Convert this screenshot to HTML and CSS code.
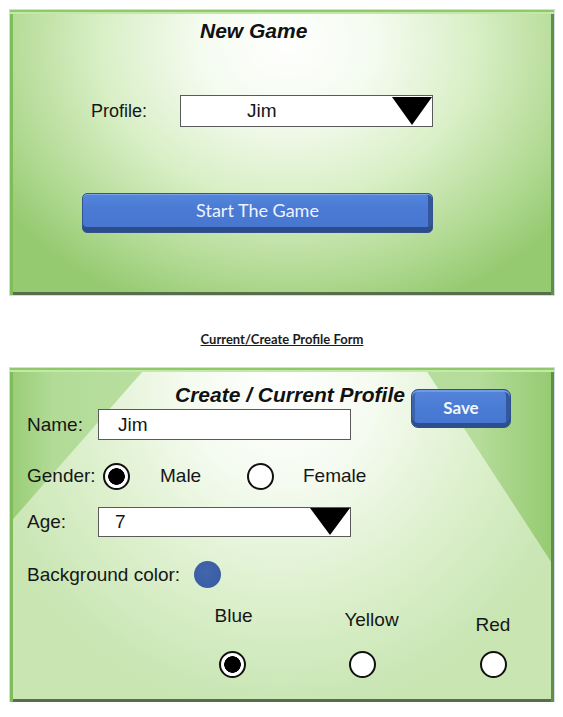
FILE: index.html
```html
<!DOCTYPE html>
<html>
<head>
<meta charset="utf-8">
<title>Game mockups</title>
<link rel="stylesheet" href="styles.css">
</head>
<body>
<div class="page">
  <section class="panel panel-game">
    <h1 class="title title-game">New Game</h1>
    <div class="profile-row">
      <span class="profile-label">Profile:</span>
      <div class="select select-profile"><span class="select-value">Jim</span><span class="caret"></span></div>
    </div>
    <div class="start-btn">Start The Game</div>
  </section>

  <p class="caption">Current/Create Profile Form</p>

  <section class="panel panel-profile">
    <div class="header-row">
      <h2 class="title title-profile">Create / Current Profile</h2>
      <div class="save-btn">Save</div>
    </div>
    <div class="form-row name-row">
      <span class="field-label">Name:</span>
      <div class="text-field name-field">Jim</div>
    </div>
    <div class="form-row gender-row">
      <span class="gender-label">Gender:</span>
      <span class="radio radio-on"></span>
      <span class="gender-opt gender-male">Male</span>
      <span class="radio"></span>
      <span class="gender-opt gender-female">Female</span>
    </div>
    <div class="form-row age-row">
      <span class="field-label">Age:</span>
      <div class="select select-age"><span class="select-value age-value">7</span><span class="caret"></span></div>
    </div>
    <div class="form-row bg-row">
      <span class="bg-label">Background color:</span>
      <span class="color-dot"></span>
    </div>
    <div class="color-grid">
      <div class="color-opt">
        <span class="color-label label-blue">Blue</span>
        <span class="radio radio-on"></span>
      </div>
      <div class="color-opt">
        <span class="color-label label-yellow">Yellow</span>
        <span class="radio"></span>
      </div>
      <div class="color-opt">
        <span class="color-label label-red">Red</span>
        <span class="radio"></span>
      </div>
    </div>
  </section>
</div>
</body>
</html>
```

FILE: styles.css
```css
html, body {
  margin: 0;
  padding: 0;
  background: #ffffff;
}

body {
  font-family: "Liberation Sans", Arial, sans-serif;
  color: #161616;
}

.page {
  padding: 10px 0 0 10px;
  width: 544px;
}

.panel {
  position: relative;
  box-sizing: border-box;
  width: 544px;
  box-shadow:
    0 0 0 1px #d3dbe6,
    inset 0 2px 0 #8fc96c,
    inset 0 4px 0 #c4e8a6,
    inset 3px 0 0 #7fbd5b,
    inset -3px 0 0 #5f8f44,
    inset 0 -3px 0 #566e4c;
  overflow: hidden;
}

/* ---------- Panel 1 ---------- */
.panel-game {
  height: 285px;
  background:
    radial-gradient(ellipse 64% 100% at 51% 12%, #ffffff 0%, #f4fbef 26%, #d9efc6 54%, #b4db96 80%, #95ca70 100%);
}

.title {
  margin: 0;
  font-weight: bold;
  font-style: italic;
  font-size: 21px;
  line-height: 27px;
  color: #111;
  position: relative;
}

.title-game {
  padding: 7px 0 0 190px;
}

.profile-row {
  display: flex;
  align-items: center;
  margin-top: 51px;
  padding-left: 81px;
  height: 32px;
  position: relative;
}

.profile-label {
  width: 89px;
  font-size: 18px;
}

.select {
  box-sizing: border-box;
  display: flex;
  background: #ffffff;
  border: 1px solid #5a5a5a;
  width: 253px;
  height: 32px;
}

.select-value {
  flex: 1;
  font-size: 19px;
  line-height: 30px;
}

.select-profile .select-value {
  padding-left: 66px;
}

.caret {
  width: 0;
  height: 0;
  margin-top: 1px;
  border-left: 20px solid transparent;
  border-right: 20px solid transparent;
  border-top: 28px solid #000;
}

.start-btn {
  position: relative;
  box-sizing: border-box;
  margin: 66px 0 0 72px;
  width: 351px;
  height: 40px;
  border-radius: 5px;
  border: 1px solid #34548f;
  background: linear-gradient(#5486dc 0%, #4a7ad3 40%, #4776cf 100%);
  box-shadow:
    inset 0 1px 0 #7aa3e8,
    inset 0 -5px 0 #2d4c89,
    inset -4px 0 0 #33579a;
  color: #eef3ff;
  font-family: Lato, "Open Sans", sans-serif;
  font-size: 18px;
  line-height: 33px;
  text-align: center;
}

/* ---------- Caption ---------- */
.caption {
  margin: 37px 0 0 0;
  height: 15px;
  font-family: Lato, "Open Sans", sans-serif;
  font-weight: bold;
  font-size: 13px;
  line-height: 15px;
  text-align: center;
  text-decoration: underline;
  color: #1c1c1c;
}

/* ---------- Panel 2 ---------- */
.panel-profile {
  margin-top: 21px;
  height: 334px;
  background:
    linear-gradient(to right, #98cd75 0%, #b2db97 8%, #bfe2a7 40%, #b5dc9a 86%, #94ca70 100%);
}

.panel-profile::before {
  content: "";
  position: absolute;
  top: 4px;
  left: 3px;
  right: 3px;
  bottom: 3px;
  clip-path: polygon(24% 0, 77% 0, 100% 58%, 100% 100%, 0 100%, 0 45%);
  background: radial-gradient(ellipse 58% 100% at 50% 4%, #ffffff 0%, #f5fbf0 30%, #dff1d0 62%, #c8e5b2 100%);
}

.header-row {
  display: flex;
  align-items: flex-start;
  margin-top: 13px;
  height: 27px;
  position: relative;
  z-index: 1;
}

.title-profile {
  padding-left: 165px;
}

.save-btn {
  box-sizing: border-box;
  margin: 8px 43px 0 auto;
  width: 100px;
  height: 39px;
  border-radius: 7px;
  border: 1px solid #2f4f8c;
  background: linear-gradient(#5585da 0%, #4a7bd4 50%, #4676cf 100%);
  box-shadow:
    inset 0 2px 0 #6f9be3,
    inset 0 -4px 0 #2e4f8e,
    inset 3px 0 0 #3c64ab,
    inset -4px 0 0 #33589c;
  color: #f3f6ff;
  font-family: Lato, "Open Sans", sans-serif;
  font-weight: bold;
  font-size: 17px;
  line-height: 35px;
  text-align: center;
}

.form-row {
  display: flex;
  align-items: center;
  padding-left: 17px;
  position: relative;
  z-index: 1;
  font-size: 19px;
}

.field-label {
  width: 71px;
}

.name-row {
  margin-top: 1px;
  height: 31px;
}

.text-field {
  box-sizing: border-box;
  width: 253px;
  height: 31px;
  background: #fff;
  border: 1px solid #5a5a5a;
  padding-left: 19px;
  font-size: 19px;
  line-height: 29px;
}

.gender-row {
  margin-top: 22px;
  height: 28px;
}

.gender-label {
  width: 76px;
}

.radio {
  box-sizing: border-box;
  flex: none;
  display: block;
  width: 27px;
  height: 27px;
  border-radius: 50%;
  border: 2px solid #111;
  background: #ffffff;
}

.radio-on {
  background: radial-gradient(circle, #000 0 8px, #fff 8.6px);
}

.gender-male {
  box-sizing: border-box;
  width: 117px;
  padding-left: 30px;
}

.gender-female {
  padding-left: 29px;
}

.age-row {
  margin-top: 17px;
  height: 30px;
}

.select-age {
  height: 30px;
}

.select-age .select-value {
  padding-left: 16px;
  line-height: 28px;
}

.select-age .caret {
  margin-top: 0;
  border-top-width: 27px;
}

.bg-row {
  margin-top: 24px;
  height: 27px;
}

.bg-label {
  width: 167px;
}

.color-dot {
  display: block;
  width: 27px;
  height: 27px;
  border-radius: 50%;
  background: radial-gradient(circle at 45% 40%, #4166ae 0%, #3a5ea4 70%, #33548f 100%);
}

.color-grid {
  position: relative;
  z-index: 1;
  display: grid;
  grid-template-columns: 100px 100px 100px;
  column-gap: 30.5px;
  margin: 17px 0 0 172px;
}

.color-opt {
  display: flex;
  flex-direction: column;
  align-items: center;
}

.color-label {
  box-sizing: border-box;
  display: block;
  height: 46px;
  font-size: 19px;
  line-height: 22px;
}

.label-blue {
  padding-left: 3px;
}

.label-yellow {
  padding-top: 4px;
  padding-left: 18px;
}

.label-red {
  padding-top: 9px;
}
```
